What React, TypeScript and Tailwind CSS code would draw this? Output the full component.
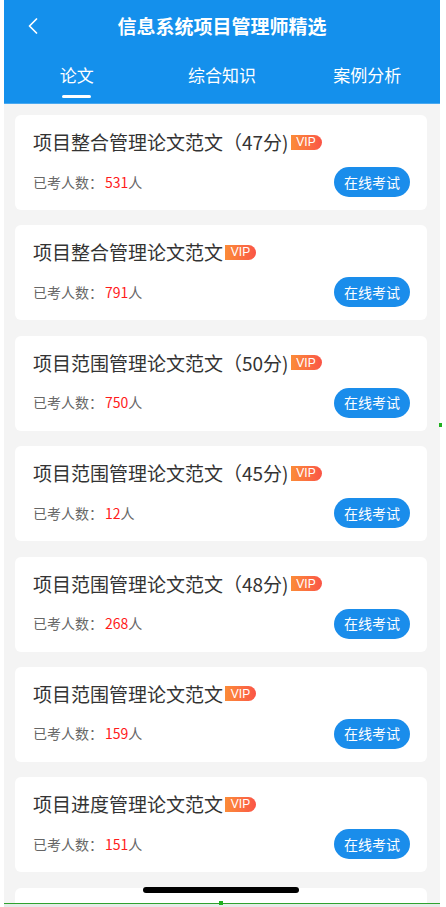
import { ChevronLeft } from 'lucide-react';

const papers = [
  { title: '项目整合管理论文范文（47分)', count: 531 },
  { title: '项目整合管理论文范文', count: 791 },
  { title: '项目范围管理论文范文（50分)', count: 750 },
  { title: '项目范围管理论文范文（45分)', count: 12 },
  { title: '项目范围管理论文范文（48分)', count: 268 },
  { title: '项目范围管理论文范文', count: 159 },
  { title: '项目进度管理论文范文', count: 151 },
];

const tabs = ['论文', '综合知识', '案例分析'];

const VipBadge = () => (
  <span className="ml-[2px] inline-flex h-[15px] w-[31px] items-center justify-center rounded-tl-[7px] rounded-bl-[2px] rounded-r-full bg-gradient-to-r from-[#fb8b37] to-[#fa5446] font-['Liberation_Sans',sans-serif] text-[12px] leading-none text-white">
    VIP
  </span>
);

const PaperCard = ({ title, count }: { title: string; count: number }) => (
  <div className="shrink-0 rounded-[6px] bg-white px-[18px] pt-[16px] pb-[13px]">
    <div className="flex h-[22px] items-center">
      <span className="text-[19px] leading-[22px] text-[#333]">{title}</span>
      <VipBadge />
    </div>
    <div className="mt-[14px] flex h-[30px] items-center justify-between">
      <div className="text-[14px] text-[#666]">
        已考人数：<span className="ml-[2px] text-[#ff1b1b]">{count}</span>人
      </div>
      <button className="-mr-[1px] h-[30px] rounded-full bg-[#1a8deb] px-[10px] text-[14px] text-white">
        在线考试
      </button>
    </div>
  </div>
);

export default function App() {
  return (
    <div className="relative h-[907px] w-[446px] overflow-hidden bg-white font-['Noto_Sans_CJK_SC',sans-serif]">
      <div className="ml-[4px] flex h-[903px] w-[436px] flex-col overflow-hidden bg-[#f4f4f4]">
        <header className="shrink-0 bg-[#1490ec]">
          <div className="relative flex h-[52px] items-center justify-center">
            <ChevronLeft className="absolute left-[15px] top-[12px] text-white" size={28} strokeWidth={1.5} />
            <h1 className="text-[19px] font-semibold text-white">信息系统项目管理师精选</h1>
          </div>
          <nav className="grid h-[51px] grid-cols-3">
            {tabs.map((t, i) => (
              <div key={t} className="flex flex-col items-center pt-[9px]">
                <span className="text-[17px] leading-[28px] text-white">{t}</span>
                {i === 0 && <span className="mt-[6px] h-[3px] w-[29px] rounded-full bg-white" />}
              </div>
            ))}
          </nav>
          <div className="h-px bg-[#4aa9f0]" />
        </header>

        <main className="flex flex-col gap-[15.4px] pt-[11px] pl-[11px] pr-[13px]">
          {papers.map((p, i) => (
            <PaperCard key={i} title={p.title} count={p.count} />
          ))}
          {/* next card, cut off by the screen edge */}
          <div className="h-[95px] shrink-0 rounded-[6px] bg-white" />
        </main>
      </div>

      <div className="ml-[4px] h-px w-[436px] bg-[#2ea32e]" />
      <div className="ml-[4px] h-[3px] w-[436px] bg-[#e8e8e8]" />

      {/* home indicator + screenshot markers */}
      <div className="absolute left-[143px] top-[887px] h-[6px] w-[156px] rounded-full bg-black" />
      <div className="absolute left-[219px] top-[901px] h-[4px] w-[4px] bg-[#20b020]" />
      <div className="absolute left-[439px] top-[423px] h-[4px] w-[3px] bg-[#20b020]" />
    </div>
  );
}
